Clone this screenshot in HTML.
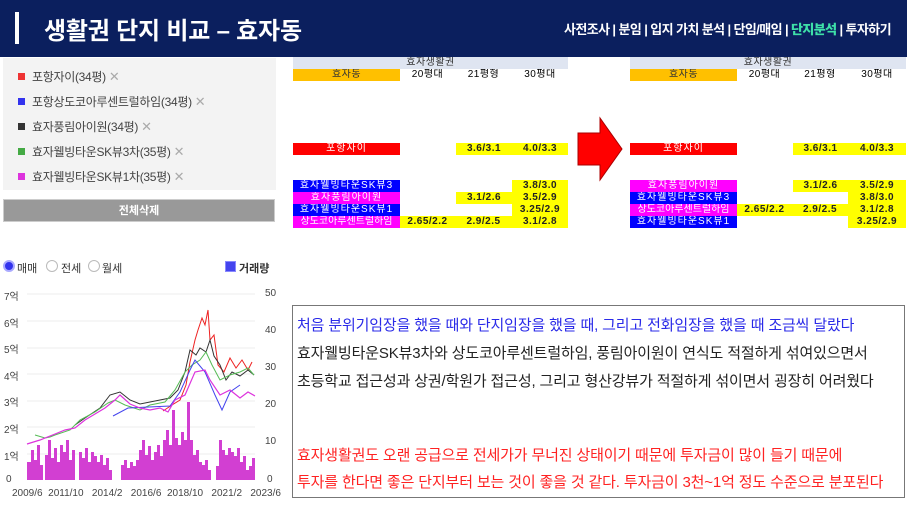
<!DOCTYPE html>
<html><head><meta charset="utf-8">
<style>
*{margin:0;padding:0;box-sizing:border-box}
body{width:907px;height:509px;background:#fff;position:relative;overflow:hidden;font-family:"Liberation Sans","Noto Sans CJK KR",sans-serif}
.hdr{position:absolute;left:0;top:0;width:907px;height:57px;background:#0b1f5e}
.bar{position:absolute;left:15px;top:12px;width:4px;height:32px;background:#fff}
.title{position:absolute;left:44px;top:11px;color:#fff;font-size:24px;font-weight:bold;letter-spacing:-0.2px}
.nav{position:absolute;right:16px;top:19px;color:#fff;font-size:13px;font-weight:bold;letter-spacing:-0.6px}
.nav b{color:#3ee0a8}
.lp{position:absolute;left:3px;top:58px;width:273px;height:132px;background:#f3f3f3}
.li{position:absolute;left:15px;font-size:12px;color:#444;white-space:nowrap;letter-spacing:-0.3px}
.li i{display:inline-block;width:7px;height:7px;margin-right:7px;vertical-align:1px}
.li span{color:#aaa;font-size:13px}
.btn{position:absolute;left:3px;top:199px;width:272px;height:23px;background:#999;color:#fff;font-size:11px;font-weight:bold;text-align:center;line-height:23px;border:1px solid #ccc}
.c{position:absolute;height:12px;font-size:10px;text-align:center;line-height:12px;white-space:nowrap;letter-spacing:0.5px;overflow:hidden}
.y{background:#ffff00;color:#222;font-weight:bold}
.n{color:#fff;letter-spacing:1px}
.box{position:absolute;left:292px;top:305px;width:613px;height:193px;border:1.5px solid #777}
.t{position:absolute;left:4px;font-size:15px;white-space:nowrap;letter-spacing:-0.15px}
.ax{position:absolute;font-size:10px;color:#444}
</style></head><body>
<div class="hdr"><div class="bar"></div><div class="title">생활권 단지 비교 – 효자동</div>
<div class="nav">사전조사 | 분임 | 입지 가치 분석 | 단임/매임 | <b>단지분석</b> | 투자하기</div></div>

<div class="lp">
<div class="li" style="top:10px"><i style="background:#e33"></i>포항자이(34평) <span>✕</span></div>
<div class="li" style="top:35px"><i style="background:#33e"></i>포항상도코아루센트럴하임(34평) <span>✕</span></div>
<div class="li" style="top:60px"><i style="background:#333"></i>효자풍림아이원(34평) <span>✕</span></div>
<div class="li" style="top:85px"><i style="background:#4a4"></i>효자웰빙타운SK뷰3차(35평) <span>✕</span></div>
<div class="li" style="top:110px"><i style="background:#d3d"></i>효자웰빙타운SK뷰1차(35평) <span>✕</span></div>
</div>
<div class="btn">전체삭제</div>

<!-- left table -->
<div class="c" style="left:293px;top:57px;width:275px;background:#dfe5f1;color:#333">효자생활권</div>
<div class="c" style="left:293px;top:69px;width:107px;background:#ffc000;color:#333">효자동</div>
<div class="c" style="left:400px;top:69px;width:55px">20평대</div>
<div class="c" style="left:455px;top:69px;width:57px">21평형</div>
<div class="c" style="left:512px;top:69px;width:56px">30평대</div>
<div class="c n" style="left:293px;top:143px;width:107px;background:#f00">포항자이</div>
<div class="c y" style="left:456px;top:143px;width:56px">3.6/3.1</div>
<div class="c y" style="left:512px;top:143px;width:56px">4.0/3.3</div>
<div class="c n" style="left:293px;top:180px;width:107px;background:#00f">효자웰빙타운SK뷰3</div>
<div class="c y" style="left:512px;top:180px;width:56px">3.8/3.0</div>
<div class="c n" style="left:293px;top:192px;width:107px;background:#f0f">효자풍림아이원</div>
<div class="c y" style="left:456px;top:192px;width:56px">3.1/2.6</div>
<div class="c y" style="left:512px;top:192px;width:56px">3.5/2.9</div>
<div class="c n" style="left:293px;top:204px;width:107px;background:#00f">효자웰빙타운SK뷰1</div>
<div class="c y" style="left:512px;top:204px;width:56px">3.25/2.9</div>
<div class="c n" style="left:293px;top:216px;width:107px;background:#f0f;letter-spacing:0">상도코아루센트럴하임</div>
<div class="c y" style="left:400px;top:216px;width:55px">2.65/2.2</div>
<div class="c y" style="left:455px;top:216px;width:57px">2.9/2.5</div>
<div class="c y" style="left:512px;top:216px;width:56px">3.1/2.8</div>

<svg style="position:absolute;left:576px;top:116px" width="48" height="66"><polygon points="2,17 24,17 24,2 46,33 24,64 24,49 2,49" fill="#f00" stroke="#a00" stroke-width="1"/></svg>

<!-- right table -->
<div class="c" style="left:630px;top:57px;width:276px;background:#dfe5f1;color:#333">효자생활권</div>
<div class="c" style="left:630px;top:69px;width:107px;background:#ffc000;color:#333">효자동</div>
<div class="c" style="left:737px;top:69px;width:55px">20평대</div>
<div class="c" style="left:792px;top:69px;width:56px">21평형</div>
<div class="c" style="left:848px;top:69px;width:58px">30평대</div>
<div class="c n" style="left:630px;top:143px;width:107px;background:#f00">포항자이</div>
<div class="c y" style="left:793px;top:143px;width:55px">3.6/3.1</div>
<div class="c y" style="left:848px;top:143px;width:58px">4.0/3.3</div>
<div class="c n" style="left:630px;top:180px;width:107px;background:#f0f">효자풍림아이원</div>
<div class="c y" style="left:793px;top:180px;width:55px">3.1/2.6</div>
<div class="c y" style="left:848px;top:180px;width:58px">3.5/2.9</div>
<div class="c n" style="left:630px;top:192px;width:107px;background:#00f">효자웰빙타운SK뷰3</div>
<div class="c y" style="left:848px;top:192px;width:58px">3.8/3.0</div>
<div class="c n" style="left:630px;top:204px;width:107px;background:#f0f;letter-spacing:0">상도코아루센트럴하임</div>
<div class="c y" style="left:737px;top:204px;width:55px">2.65/2.2</div>
<div class="c y" style="left:792px;top:204px;width:56px">2.9/2.5</div>
<div class="c y" style="left:848px;top:204px;width:58px">3.1/2.8</div>
<div class="c n" style="left:630px;top:216px;width:107px;background:#00f">효자웰빙타운SK뷰1</div>
<div class="c y" style="left:848px;top:216px;width:58px">3.25/2.9</div>

<!-- chart -->
<div style="position:absolute;left:3px;top:260px;width:12px;height:12px;border-radius:50%;background:#33e;border:2px solid #aaf"></div>
<div class="ax" style="left:17px;top:260px;font-size:11px;color:#333">매매</div>
<div style="position:absolute;left:46px;top:260px;width:12px;height:12px;border-radius:50%;border:1px solid #bbb"></div>
<div class="ax" style="left:61px;top:260px;font-size:11px;color:#333">전세</div>
<div style="position:absolute;left:88px;top:260px;width:12px;height:12px;border-radius:50%;border:1px solid #bbb"></div>
<div class="ax" style="left:102px;top:260px;font-size:11px;color:#333">월세</div>
<div style="position:absolute;left:225px;top:261px;width:11px;height:11px;background:#44e;border:1px solid #88f"></div>
<div class="ax" style="left:239px;top:260px;font-size:11px;color:#333;font-weight:bold">거래량</div>
<div class="ax" style="left:4px;top:288px">7억</div><div class="ax" style="left:4px;top:315px">6억</div><div class="ax" style="left:4px;top:341px">5억</div><div class="ax" style="left:4px;top:368px">4억</div><div class="ax" style="left:4px;top:394px">3억</div><div class="ax" style="left:4px;top:421px">2억</div><div class="ax" style="left:4px;top:448px">1억</div><div class="ax" style="left:6px;top:474px">0</div>
<div class="ax" style="left:265px;top:288px">50</div><div class="ax" style="left:265px;top:325px">40</div><div class="ax" style="left:265px;top:362px">30</div><div class="ax" style="left:265px;top:399px">20</div><div class="ax" style="left:265px;top:436px">10</div><div class="ax" style="left:267px;top:474px">0</div>
<div class="ax" style="left:12px;top:488px;white-space:nowrap">2009/6&nbsp;&nbsp;2011/10&nbsp;&nbsp;&nbsp;2014/2&nbsp;&nbsp;&nbsp;2016/6&nbsp;&nbsp;2018/10&nbsp;&nbsp;&nbsp;2021/2&nbsp;&nbsp;&nbsp;2023/6</div>
<svg style="position:absolute;left:0;top:0" width="290" height="509">
<g stroke="#eee" stroke-width="1"><line x1="27" y1="294" x2="255" y2="294"/><line x1="27" y1="321" x2="255" y2="321"/><line x1="27" y1="348" x2="255" y2="348"/><line x1="27" y1="374" x2="255" y2="374"/><line x1="27" y1="401" x2="255" y2="401"/><line x1="27" y1="427" x2="255" y2="427"/><line x1="27" y1="454" x2="255" y2="454"/></g>
<g fill="#d23fd2">
<rect x="27" y="462" width="4" height="18"/><rect x="31" y="450" width="3" height="30"/><rect x="34" y="460" width="3" height="20"/><rect x="37" y="445" width="3" height="35"/><rect x="40" y="465" width="3" height="15"/>
<rect x="45" y="455" width="3" height="25"/><rect x="48" y="440" width="3" height="40"/><rect x="51" y="458" width="3" height="22"/><rect x="54" y="448" width="3" height="32"/><rect x="57" y="462" width="3" height="18"/><rect x="60" y="445" width="3" height="35"/><rect x="63" y="452" width="3" height="28"/><rect x="66" y="440" width="3" height="40"/><rect x="69" y="460" width="3" height="20"/><rect x="72" y="450" width="3" height="30"/>
<rect x="79" y="452" width="3" height="28"/><rect x="82" y="458" width="3" height="22"/><rect x="85" y="448" width="3" height="32"/><rect x="88" y="462" width="3" height="18"/><rect x="91" y="452" width="3" height="28"/><rect x="94" y="456" width="3" height="24"/><rect x="97" y="462" width="3" height="18"/><rect x="100" y="455" width="3" height="25"/><rect x="103" y="465" width="3" height="15"/><rect x="106" y="458" width="3" height="22"/><rect x="109" y="470" width="3" height="10"/>
<rect x="121" y="465" width="3" height="15"/><rect x="124" y="460" width="3" height="20"/><rect x="127" y="468" width="3" height="12"/><rect x="130" y="462" width="3" height="18"/><rect x="133" y="466" width="3" height="14"/><rect x="136" y="460" width="3" height="20"/><rect x="139" y="450" width="3" height="30"/><rect x="142" y="440" width="3" height="40"/><rect x="145" y="455" width="3" height="25"/><rect x="148" y="446" width="3" height="34"/><rect x="151" y="460" width="3" height="20"/><rect x="154" y="452" width="3" height="28"/>
<rect x="157" y="445" width="3" height="35"/><rect x="160" y="456" width="3" height="24"/><rect x="163" y="440" width="3" height="40"/><rect x="166" y="430" width="3" height="50"/><rect x="169" y="445" width="3" height="35"/><rect x="172" y="410" width="3" height="70"/><rect x="175" y="438" width="3" height="42"/><rect x="178" y="445" width="3" height="35"/><rect x="181" y="432" width="3" height="48"/><rect x="184" y="440" width="3" height="40"/><rect x="187" y="402" width="3" height="78"/><rect x="190" y="440" width="3" height="40"/><rect x="193" y="455" width="3" height="25"/><rect x="196" y="450" width="3" height="30"/><rect x="199" y="462" width="3" height="18"/><rect x="202" y="465" width="3" height="15"/>
<rect x="205" y="460" width="3" height="20"/><rect x="208" y="470" width="3" height="10"/><rect x="216" y="466" width="3" height="14"/><rect x="219" y="440" width="3" height="40"/><rect x="222" y="450" width="3" height="30"/><rect x="225" y="455" width="3" height="25"/><rect x="228" y="448" width="3" height="32"/><rect x="231" y="452" width="3" height="28"/><rect x="234" y="456" width="3" height="24"/><rect x="237" y="448" width="3" height="32"/><rect x="240" y="462" width="3" height="18"/><rect x="243" y="456" width="3" height="24"/><rect x="246" y="470" width="3" height="10"/><rect x="249" y="466" width="3" height="14"/><rect x="252" y="458" width="3" height="22"/>
</g>
<polyline fill="none" stroke="#e22" stroke-width="1" points="163,411 172,405 180,400 186,385 190,362 195,340 198,330 202,318 205,325 208,310 210,340 214,335 218,365 224,372 230,358 236,368 242,360 248,370 252,362"/>
<polyline fill="none" stroke="#333" stroke-width="1" points="75,425 85,418 100,408 110,395 120,392 130,400 140,404 150,402 160,400 170,398 178,390 185,372 190,350 196,355 200,348 206,352 210,340 214,356 220,365 226,380 232,372 240,376 248,370 254,375"/>
<polyline fill="none" stroke="#5b5" stroke-width="1" points="35,435 45,438 50,437 55,435 70,430 80,420 95,412 108,403 115,400 125,405 140,410 150,405 165,402 175,390 185,372 192,365 200,360 206,352 212,365 220,380 230,375 240,372 248,368 254,375"/>
<polyline fill="none" stroke="#44e" stroke-width="1" points="113,416 128,408 170,406 180,392 190,370 195,360 205,372 215,395 222,410 230,392 240,385"/>
<polyline fill="none" stroke="#d3d" stroke-width="1.2" points="27,444 40,440 55,434 65,430 75,428 85,420 95,414 105,408 115,400 120,395 130,404 140,408 150,410 160,408 168,412 175,400 185,395 195,372 205,370 210,380 220,395 230,390 240,398 248,392 255,396"/>
</svg>

<div class="box">
<div class="t" style="top:8px;color:#2a2ae8">처음 분위기임장을 했을 때와 단지임장을 했을 때, 그리고 전화임장을 했을 때 조금씩 달랐다</div>
<div class="t" style="top:36px;color:#222">효자웰빙타운SK뷰3차와 상도코아루센트럴하임, 풍림아이원이 연식도 적절하게 섞여있으면서</div>
<div class="t" style="top:64px;color:#222">초등학교 접근성과 상권/학원가 접근성, 그리고 형산강뷰가 적절하게 섞이면서 굉장히 어려웠다</div>
<div class="t" style="top:138px;color:#f22">효자생활권도 오랜 공급으로 전세가가 무너진 상태이기 때문에 투자금이 많이 들기 때문에</div>
<div class="t" style="top:165px;color:#f22">투자를 한다면 좋은 단지부터 보는 것이 좋을 것 같다. 투자금이 3천~1억 정도 수준으로 분포된다</div>
</div>
</body></html>
